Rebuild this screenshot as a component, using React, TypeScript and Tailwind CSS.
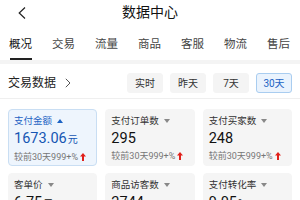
import React from 'react'

const tabs = ['概况', '交易', '流量', '商品', '客服', '物流', '售后']
const ranges = ['实时', '昨天', '7天', '30天']

type Metric = { label: string; value: string; unit?: string; compare?: string; active?: boolean }

const metrics: Metric[] = [
  { label: '支付金额', value: '1673.06', unit: '元', compare: '较前30天999+%', active: true },
  { label: '支付订单数', value: '295', compare: '较前30天999+%' },
  { label: '支付买家数', value: '248', compare: '较前30天999+%' },
  { label: '客单价', value: '6.75', unit: '元', compare: '较前30天999+%' },
  { label: '商品访客数', value: '2744', compare: '较前30天999+%' },
  { label: '支付转化率', value: '9.05', unit: '%', compare: '较前30天999+%' },
]

const UpArrow = () => (
  <svg width="6" height="8" viewBox="0 0 6 8" className="ml-[2px]">
    <path d="M3 0 L6 3.6 L4 3.6 L4 8 L2 8 L2 3.6 L0 3.6 Z" fill="#e0201b" />
  </svg>
)

const Caret = ({ up }: { up?: boolean }) => (
  <svg width="6" height="4" viewBox="0 0 6 4" className="ml-[5px]">
    {up ? <path d="M0 4 L3 0 L6 4 Z" fill="#1d63c4" /> : <path d="M0 0 L6 0 L3 4 Z" fill="#888" />}
  </svg>
)

const MetricCard = ({ m }: { m: Metric }) => (
  <div
    className={
      m.active
        ? 'h-[57px] rounded-[4px] border border-[#c9def3] bg-[#eef5fd] px-[5px] pt-[5px]'
        : 'h-[57px] rounded-[4px] border border-[#f5f5f5] bg-[#f5f5f5] px-[5px] pt-[5px]'
    }
  >
    <div className={`flex items-center text-[9.5px] leading-[12px] ${m.active ? 'text-[#1d63c4]' : 'text-[#333]'}`}>
      {m.label}
      <Caret up={m.active} />
    </div>
    <div className={`mt-[2px] flex items-baseline leading-[20px] ${m.active ? 'text-[#1556b3]' : 'text-[#111]'}`}>
      <span className="text-[14.5px]">{m.value}</span>
      {m.unit && <span className="ml-[1px] text-[10px]">{m.unit}</span>}
    </div>
    <div className="mt-[1px] flex items-center text-[9px] leading-[12px] text-[#777]">
      {m.compare}
      <UpArrow />
    </div>
  </div>
)

export default function App() {
  return (
    <div
      className="h-[200px] w-[300px] overflow-hidden bg-white"
      style={{ fontFamily: 'Roboto, "Noto Sans CJK SC", sans-serif' }}
    >
      <div className="grid h-[25px] grid-cols-[1fr_auto_1fr] items-center">
        <div className="pl-[18px]">
          <svg width="8" height="12" viewBox="0 0 8 12">
            <path d="M7 0.5 L1.2 6 L7 11.5" fill="none" stroke="#222" strokeWidth="1.2" />
          </svg>
        </div>
        <div className="text-[14px] text-[#111]">数据中心</div>
        <div />
      </div>

      <div className="flex gap-[20px] px-[9px]">
        {tabs.map((t, i) => (
          <div key={t} className="flex flex-col items-center pt-[12px]">
            <span className={`whitespace-nowrap text-[11.5px] leading-[14px] ${i === 0 ? 'text-[#111]' : 'text-[#444]'}`}>
              {t}
            </span>
            <div className={`mt-[7px] h-[2px] w-[22px] ${i === 0 ? 'bg-[#222]' : 'bg-transparent'}`} />
          </div>
        ))}
      </div>

      <div className="h-[4px] bg-[#f4f4f4]" />

      <div className="flex items-center justify-between border-b border-[#efefef] pl-[8px] pr-[8px] pt-[9px] pb-[5px]">
        <div className="flex items-center text-[12px] text-[#222]">
          交易数据
          <svg width="6" height="10" viewBox="0 0 6 10" className="ml-[9px]">
            <path d="M0.8 0.8 L5 5 L0.8 9.2" fill="none" stroke="#555" strokeWidth="1" />
          </svg>
        </div>
        <div className="flex gap-[7px]">
          {ranges.map((r) => (
            <div
              key={r}
              className={
                r === '30天'
                  ? 'flex h-[20px] w-[36px] items-center justify-center rounded-[3px] border border-[#a9cdf0] bg-[#eaf3fd] text-[10px] text-[#1d63c4]'
                  : 'flex h-[20px] w-[36px] items-center justify-center rounded-[3px] border border-[#f4f4f4] bg-[#f4f4f4] text-[10px] text-[#333]'
              }
            >
              {r}
            </div>
          ))}
        </div>
      </div>

      <div className="grid grid-cols-3 gap-x-[8px] gap-y-[7px] px-[8px] pt-[10px]">
        {metrics.map((m) => (
          <MetricCard key={m.label} m={m} />
        ))}
      </div>
    </div>
  )
}
